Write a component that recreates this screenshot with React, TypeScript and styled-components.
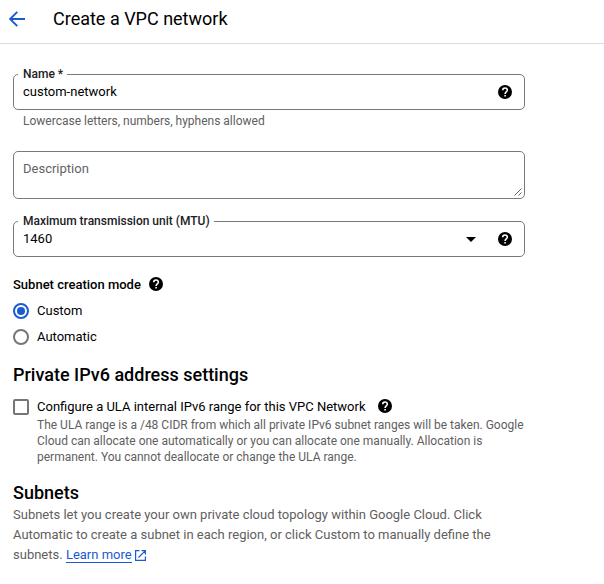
import React from "react";
import styled, { createGlobalStyle } from "styled-components";

const GlobalStyle = createGlobalStyle`
  * { box-sizing: border-box; }
  body {
    margin: 0;
    background: #fff;
    color: #000;
    font-family: Roboto, "Liberation Sans", sans-serif;
    font-size: 13px;
    line-height: 20px;
    overflow: hidden;
  }
`;

const Header = styled.header`
  display: flex;
  align-items: center;
  gap: 27px;
  height: 44px;
  padding: 0 0 5px 8px;
  border-bottom: 1px solid #dadce0;
`;

const BackButton = styled.button`
  display: flex;
  padding: 0;
  border: 0;
  background: none;
  color: #1a5bd0;
`;

const Title = styled.h1`
  margin: 0;
  font-size: 18px;
  font-weight: 400;
  line-height: 24px;
`;

const Form = styled.main`
  display: flex;
  flex-direction: column;
  width: 525px;
  padding: 30px 0 0 13px;
`;

const Field = styled.div<{ $height?: number; $top?: number }>`
  position: relative;
  display: flex;
  align-items: center;
  height: ${(p) => p.$height ?? 36}px;
  margin-top: ${(p) => p.$top ?? 0}px;
  padding: 0 12px 0 9px;
  border: 1px solid #747b80;
  border-radius: 5px;
`;

const FloatingLabel = styled.label`
  position: absolute;
  top: -9px;
  left: 4px;
  padding: 0 4px 0 5px;
  background: #fff;
  color: #202124;
  font-size: 12px;
  font-weight: 500;
  line-height: 16px;
`;

const Value = styled.span`
  flex: 1;
`;

const Placeholder = styled.span`
  flex: 1;
  align-self: flex-start;
  padding-top: 7px;
  color: #5f6368;
`;

const ResizeGrip = styled.svg`
  position: absolute;
  right: 2px;
  bottom: 2px;
`;

const Caret = styled.svg`
  margin-right: 22px;
`;

const Hint = styled.p<{ $indent: number; $top: number }>`
  margin: ${(p) => p.$top}px 0 0 ${(p) => p.$indent}px;
  color: #5f6060;
  font-size: 12px;
  line-height: 16px;
  white-space: nowrap;
`;

const GroupLabel = styled.div`
  display: flex;
  align-items: center;
  gap: 8px;
  height: 20px;
  margin-top: 18px;
  font-weight: 500;
`;

const Options = styled.div`
  display: flex;
  flex-direction: column;
  gap: 6px;
  margin-top: 6px;
`;

const Option = styled.label`
  display: flex;
  align-items: center;
  gap: 8px;
  height: 20px;
`;

const Radio = styled.span<{ $checked?: boolean }>`
  display: flex;
  align-items: center;
  justify-content: center;
  width: 16px;
  height: 16px;
  border: 2px solid ${(p) => (p.$checked ? "#1a5bd0" : "#767676")};
  border-radius: 50%;

  &::after {
    content: "";
    width: 8px;
    height: 8px;
    border-radius: 50%;
    background: ${(p) => (p.$checked ? "#1a5bd0" : "transparent")};
  }
`;

const Checkbox = styled.span`
  width: 16px;
  height: 16px;
  border: 2px solid #767676;
  border-radius: 2px;
`;

const CheckLabel = styled.span`
  margin-right: 4px;
`;

const CheckRow = styled(Option)`
  margin-top: 10px;
`;

const SectionTitle = styled.h2`
  margin: 16px 0 0;
  font-size: 18px;
  font-weight: 500;
  line-height: 24px;
`;

const Paragraph = styled.p`
  margin: 0;
  color: #5f6060;
  white-space: nowrap;
`;

const Link = styled.a`
  color: #1a5bd0;
  text-decoration: none;
  border-bottom: 1px solid #1a5bd0;
`;

const LinkIcon = styled.svg`
  margin-left: 3px;
  vertical-align: -2px;
`;

const HelpIcon = styled.svg<{ $lift?: number }>`
  flex: none;
  margin-bottom: ${(p) => (p.$lift ?? 0) * 2}px;
`;

const Help = ({ lift }: { lift?: number }) => (
  <HelpIcon $lift={lift} width="14" height="14" viewBox="0 0 14 14" fill="none" aria-label="Help">
    <circle cx="7" cy="7" r="7" fill="#000" />
    <path d="M4.700 5.300C4.700 3.900 5.700 3 7 3s2.300.9 2.300 2.200c0 1.600-2.200 1.700-2.200 3.700" stroke="#fff" strokeWidth="1.600" />
    <path d="M6.300 9.900h1.600v1.600H6.300z" fill="#fff" />
  </HelpIcon>
);

export default function App() {
  return (
    <>
      <GlobalStyle />
      <Header>
        <BackButton aria-label="Back">
          <svg width="18" height="18" viewBox="0 0 18 18" fill="none" stroke="currentColor" strokeWidth="1.9">
            <path d="M17 9H2.500M9.300 1.800 2.100 9l7.200 7.200" />
          </svg>
        </BackButton>
        <Title>Create a VPC network</Title>
      </Header>
      <Form>
        <Field>
          <FloatingLabel>Name *</FloatingLabel>
          <Value>custom-network</Value>
          <Help />
        </Field>
        <Hint $indent={10} $top={3}>Lowercase letters, numbers, hyphens allowed</Hint>

        <Field $height={48} $top={22}>
          <Placeholder>Description</Placeholder>
          <ResizeGrip width="8" height="8" viewBox="0 0 8 8" stroke="#555" strokeWidth="0.9">
            <path d="M0.500 7.500l7-7M4.500 7.500l3-3" />
          </ResizeGrip>
        </Field>

        <Field $top={22}>
          <FloatingLabel>Maximum transmission unit (MTU)</FloatingLabel>
          <Value>1460</Value>
          <Caret width="10" height="5" viewBox="0 0 10 5">
            <path d="M0 0h10L5 5z" />
          </Caret>
          <Help />
        </Field>

        <GroupLabel>
          Subnet creation mode
          <Help lift={1} />
        </GroupLabel>
        <Options>
          <Option><Radio $checked />Custom</Option>
          <Option><Radio />Automatic</Option>
        </Options>

        <SectionTitle>Private IPv6 address settings</SectionTitle>
        <CheckRow>
          <Checkbox />
          <CheckLabel>Configure a ULA internal IPv6 range for this VPC Network</CheckLabel>
          <Help lift={1} />
        </CheckRow>
        <Hint $indent={24} $top={0}>
          The ULA range is a /48 CIDR from which all private IPv6 subnet ranges will be taken. Google
          <br />
          Cloud can allocate one automatically or you can allocate one manually. Allocation is
          <br />
          permanent. You cannot deallocate or change the ULA range.
        </Hint>

        <SectionTitle>Subnets</SectionTitle>
        <Paragraph>
          Subnets let you create your own private cloud topology within Google Cloud. Click
          <br />
          Automatic to create a subnet in each region, or click Custom to manually define the
          <br />
          subnets. <Link>Learn more</Link>
          <LinkIcon width="11" height="11" viewBox="0 0 11 11" fill="none" stroke="#1a5bd0" strokeWidth="1.200">
            <path d="M4.500.6H.6v9.800h9.800V6.500M6.500.6h3.900v3.900M10.200.8 3.500 7.500" />
          </LinkIcon>
        </Paragraph>
      </Form>
    </>
  );
}
